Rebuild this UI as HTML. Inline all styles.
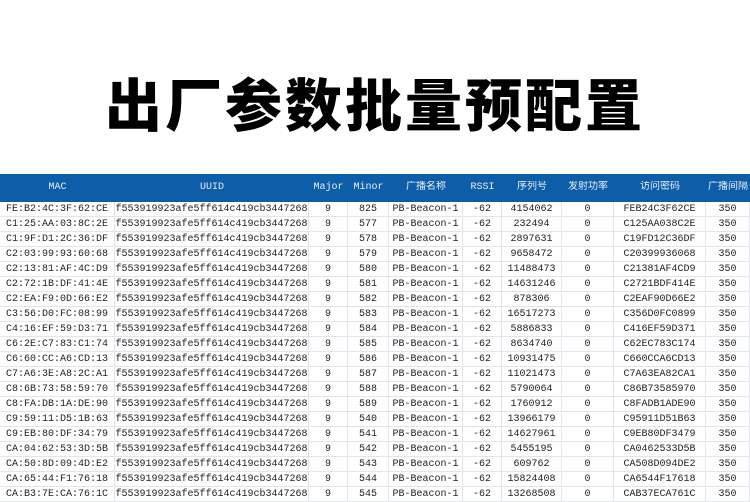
<!DOCTYPE html><html><head><meta charset="utf-8"><style>
html,body{margin:0;width:750px;height:502px;overflow:hidden;background:#fff}
#w{position:relative;width:750px;height:502px;overflow:hidden}
h1{position:absolute;top:62px;left:0;width:750px;margin:0;text-align:center;font:900 57px/80px "Noto Sans CJK SC",sans-serif;color:#000;letter-spacing:3px}
.t{position:absolute;top:174px;left:0;width:750px;font:10px "Liberation Mono","Noto Sans CJK SC",monospace;color:#222}
.h{display:flex;height:28px;background:#0e5da8;color:#e8eff8;align-items:center}
.r{display:flex;height:15px;box-sizing:border-box;border-bottom:1px solid #e1e5ee;overflow:hidden}
.h span,.r span{display:block;text-align:center;white-space:nowrap;overflow:hidden;box-sizing:border-box;line-height:14.5px;flex:none}
.r span{border-right:1px solid #e1e5ee;padding-top:1px}
span:nth-child(1){width:115px}span:nth-child(2){width:194px}span:nth-child(3){width:39px}span:nth-child(4){width:41px}span:nth-child(5){width:74px}span:nth-child(6){width:39px}span:nth-child(7){width:60px}span:nth-child(8){width:52px}span:nth-child(9){width:92px}span:nth-child(10){width:44px}
</style></head><body><div id="w">
<h1>出厂参数批量预配置</h1>
<div class="t">
<div class="h"><span>MAC</span><span>UUID</span><span>Major</span><span>Minor</span><span>广播名称</span><span>RSSI</span><span>序列号</span><span>发射功率</span><span>访问密码</span><span>广播间隔</span></div>
<div class="r"><span>FE:B2:4C:3F:62:CE</span><span>f553919923afe5ff614c419cb3447268</span><span>9</span><span>825</span><span>PB-Beacon-1</span><span>-62</span><span>4154062</span><span>0</span><span>FEB24C3F62CE</span><span>350</span></div>
<div class="r"><span>C1:25:AA:03:8C:2E</span><span>f553919923afe5ff614c419cb3447268</span><span>9</span><span>577</span><span>PB-Beacon-1</span><span>-62</span><span>232494</span><span>0</span><span>C125AA038C2E</span><span>350</span></div>
<div class="r"><span>C1:9F:D1:2C:36:DF</span><span>f553919923afe5ff614c419cb3447268</span><span>9</span><span>578</span><span>PB-Beacon-1</span><span>-62</span><span>2897631</span><span>0</span><span>C19FD12C36DF</span><span>350</span></div>
<div class="r"><span>C2:03:99:93:60:68</span><span>f553919923afe5ff614c419cb3447268</span><span>9</span><span>579</span><span>PB-Beacon-1</span><span>-62</span><span>9658472</span><span>0</span><span>C20399936068</span><span>350</span></div>
<div class="r"><span>C2:13:81:AF:4C:D9</span><span>f553919923afe5ff614c419cb3447268</span><span>9</span><span>580</span><span>PB-Beacon-1</span><span>-62</span><span>11488473</span><span>0</span><span>C21381AF4CD9</span><span>350</span></div>
<div class="r"><span>C2:72:1B:DF:41:4E</span><span>f553919923afe5ff614c419cb3447268</span><span>9</span><span>581</span><span>PB-Beacon-1</span><span>-62</span><span>14631246</span><span>0</span><span>C2721BDF414E</span><span>350</span></div>
<div class="r"><span>C2:EA:F9:0D:66:E2</span><span>f553919923afe5ff614c419cb3447268</span><span>9</span><span>582</span><span>PB-Beacon-1</span><span>-62</span><span>878306</span><span>0</span><span>C2EAF90D66E2</span><span>350</span></div>
<div class="r"><span>C3:56:D0:FC:08:99</span><span>f553919923afe5ff614c419cb3447268</span><span>9</span><span>583</span><span>PB-Beacon-1</span><span>-62</span><span>16517273</span><span>0</span><span>C356D0FC0899</span><span>350</span></div>
<div class="r"><span>C4:16:EF:59:D3:71</span><span>f553919923afe5ff614c419cb3447268</span><span>9</span><span>584</span><span>PB-Beacon-1</span><span>-62</span><span>5886833</span><span>0</span><span>C416EF59D371</span><span>350</span></div>
<div class="r"><span>C6:2E:C7:83:C1:74</span><span>f553919923afe5ff614c419cb3447268</span><span>9</span><span>585</span><span>PB-Beacon-1</span><span>-62</span><span>8634740</span><span>0</span><span>C62EC783C174</span><span>350</span></div>
<div class="r"><span>C6:60:CC:A6:CD:13</span><span>f553919923afe5ff614c419cb3447268</span><span>9</span><span>586</span><span>PB-Beacon-1</span><span>-62</span><span>10931475</span><span>0</span><span>C660CCA6CD13</span><span>350</span></div>
<div class="r"><span>C7:A6:3E:A8:2C:A1</span><span>f553919923afe5ff614c419cb3447268</span><span>9</span><span>587</span><span>PB-Beacon-1</span><span>-62</span><span>11021473</span><span>0</span><span>C7A63EA82CA1</span><span>350</span></div>
<div class="r"><span>C8:6B:73:58:59:70</span><span>f553919923afe5ff614c419cb3447268</span><span>9</span><span>588</span><span>PB-Beacon-1</span><span>-62</span><span>5790064</span><span>0</span><span>C86B73585970</span><span>350</span></div>
<div class="r"><span>C8:FA:DB:1A:DE:90</span><span>f553919923afe5ff614c419cb3447268</span><span>9</span><span>589</span><span>PB-Beacon-1</span><span>-62</span><span>1760912</span><span>0</span><span>C8FADB1ADE90</span><span>350</span></div>
<div class="r"><span>C9:59:11:D5:1B:63</span><span>f553919923afe5ff614c419cb3447268</span><span>9</span><span>540</span><span>PB-Beacon-1</span><span>-62</span><span>13966179</span><span>0</span><span>C95911D51B63</span><span>350</span></div>
<div class="r"><span>C9:EB:80:DF:34:79</span><span>f553919923afe5ff614c419cb3447268</span><span>9</span><span>541</span><span>PB-Beacon-1</span><span>-62</span><span>14627961</span><span>0</span><span>C9EB80DF3479</span><span>350</span></div>
<div class="r"><span>CA:04:62:53:3D:5B</span><span>f553919923afe5ff614c419cb3447268</span><span>9</span><span>542</span><span>PB-Beacon-1</span><span>-62</span><span>5455195</span><span>0</span><span>CA0462533D5B</span><span>350</span></div>
<div class="r"><span>CA:50:8D:09:4D:E2</span><span>f553919923afe5ff614c419cb3447268</span><span>9</span><span>543</span><span>PB-Beacon-1</span><span>-62</span><span>609762</span><span>0</span><span>CA508D094DE2</span><span>350</span></div>
<div class="r"><span>CA:65:44:F1:76:18</span><span>f553919923afe5ff614c419cb3447268</span><span>9</span><span>544</span><span>PB-Beacon-1</span><span>-62</span><span>15824408</span><span>0</span><span>CA6544F17618</span><span>350</span></div>
<div class="r"><span>CA:B3:7E:CA:76:1C</span><span>f553919923afe5ff614c419cb3447268</span><span>9</span><span>545</span><span>PB-Beacon-1</span><span>-62</span><span>13268508</span><span>0</span><span>CAB37ECA761C</span><span>350</span></div>
</div>
</div></body></html>
